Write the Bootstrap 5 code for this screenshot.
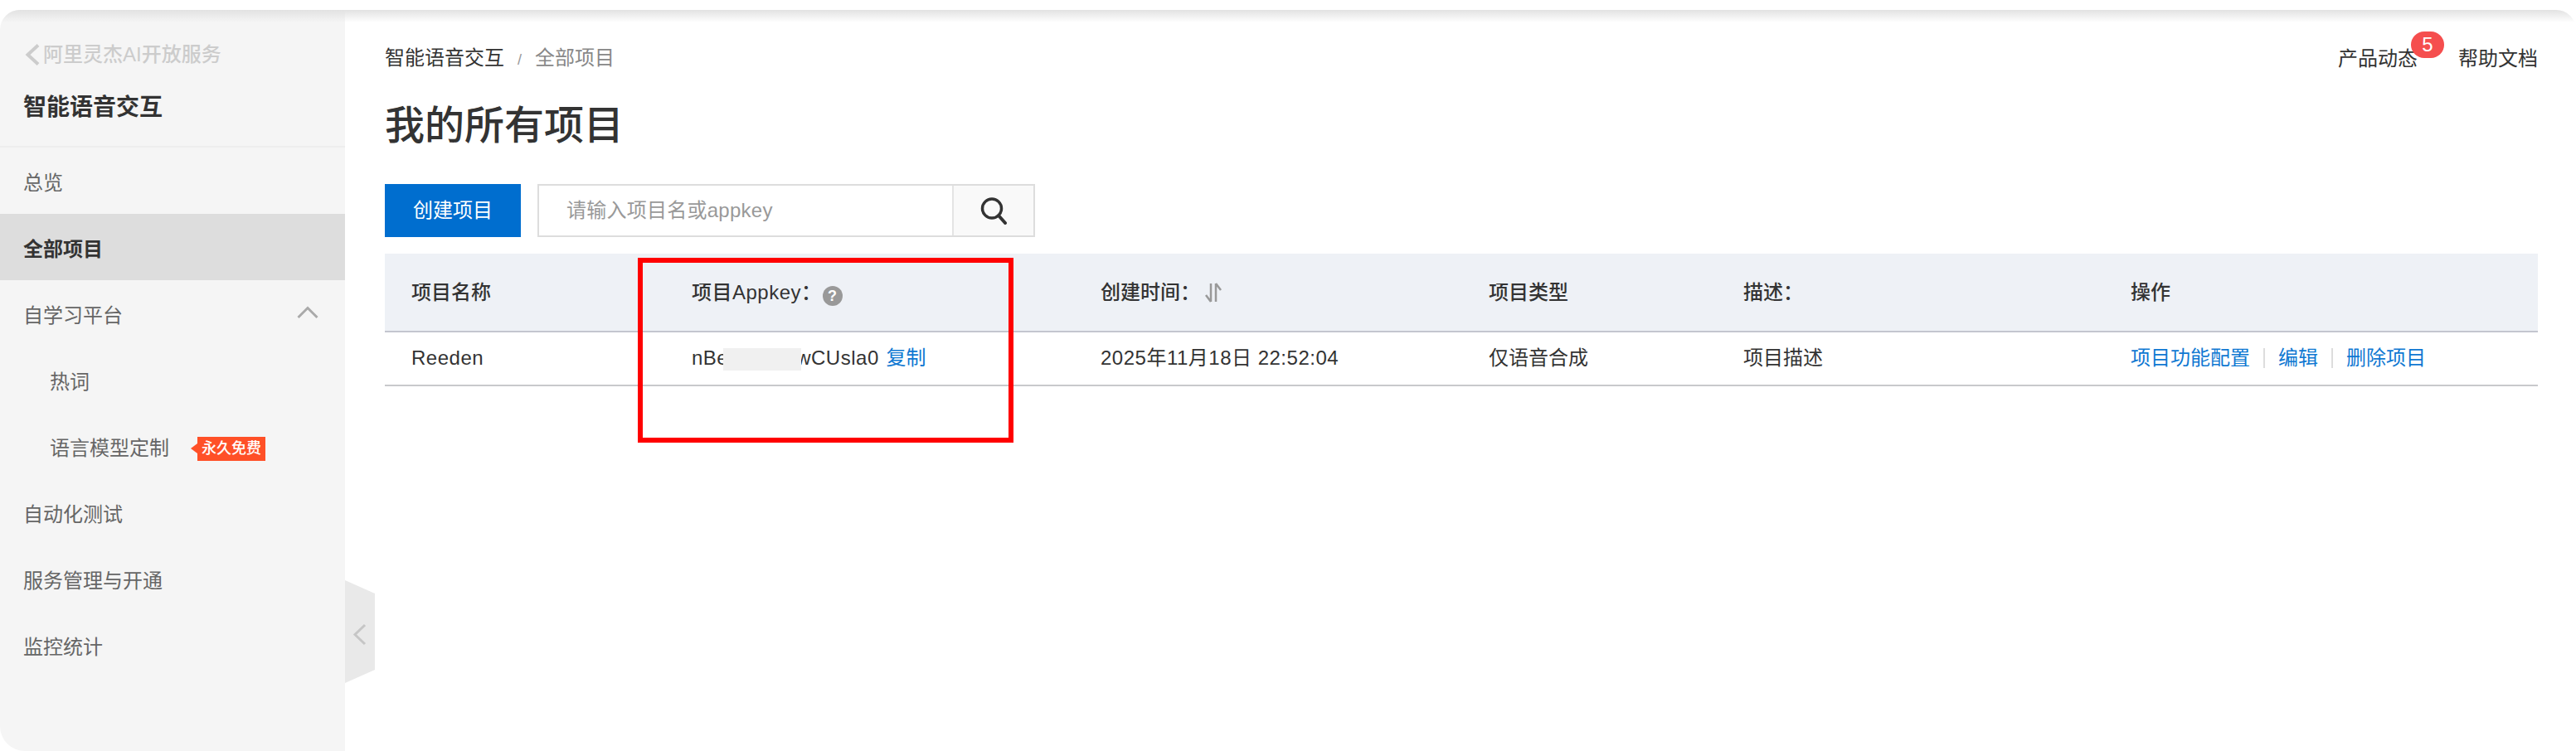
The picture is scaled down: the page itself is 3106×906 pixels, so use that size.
<!doctype html>
<html lang="zh"><head><meta charset="utf-8"><title>我的所有项目</title>
<link href="https://cdn.jsdelivr.net/npm/bootstrap@5.3.0/dist/css/bootstrap.min.css" rel="stylesheet">
<style>
html,body{height:906px;overflow:hidden;background:#fff}
body{padding-top:12px;font:24px/34px "Liberation Sans","Noto Sans CJK SC",sans-serif;color:#333}
.lat{letter-spacing:.5px}
.shell{height:894px;border-radius:24px 24px 0 30px;overflow:hidden;position:relative;background:#fff}
.shell::before{content:"";position:absolute;left:0;right:0;top:0;height:15px;background:linear-gradient(#e2e2e2,rgba(240,240,240,0));z-index:2}
.side{width:416px;flex:none;background:#f5f5f5;position:relative}
.side-head{height:166px;border-bottom:2px solid #eee;padding:37px 28px 0}
.backlink{color:#ccc;font-weight:500;display:flex;align-items:center;gap:3px;height:34px;margin-left:0}
.side-title{font-size:28px;font-weight:700;color:#333;margin-top:27px;line-height:40px}
.menu-row{height:80px;padding:6px 28px 0;color:#666;display:flex;align-items:center;text-decoration:none;justify-content:space-between}
.menu-row.on{background:#ddd;color:#333;font-weight:700}
.menu-row.sub{padding-left:60px;justify-content:flex-start}
.tag-free{position:relative;background:#ff5027;color:#fff;font-size:18px;line-height:29px;height:29px;width:82px;margin-left:34px;text-align:center;font-weight:500}
.tag-free::before{content:"";position:absolute;left:-8px;top:8px;border:6.5px solid transparent;border-left:0;border-right:8px solid #ff5027}
.fold{position:absolute;left:416px;top:688px;z-index:1}
.work{flex:1;padding:42px 46px 0 48px;min-width:0}
.crumb-row{height:34px}
.crumb-row a{color:#333;text-decoration:none}
.slash{color:#999;font-size:18px;margin:0 16px 0 16px}
.crumb-now{color:#888}
.help-links{gap:49px;position:relative}
.dot5{position:absolute;left:88px;top:-16px;width:40px;height:32px;border-radius:16px;background:#f54e4e;color:#fff;text-align:center;line-height:32px;font-size:24px}
.page-h{font-size:48px;font-weight:500;line-height:64px;margin:32px 0 0;color:#333}
.tools{margin-top:38px;height:64px;gap:20px}
.btn-new{width:164px;height:64px;background:#006ecf;border:0;border-radius:0;color:#fff;font-size:24px;padding:0}
.btn-new:hover{background:#006ecf;color:#fff}
.search-box{width:600px;height:64px;border:2px solid #ddd;display:flex}
.search-box input{flex:1;border:0;outline:0;padding:0 33px;font-size:24px;color:#333;min-width:0;letter-spacing:.25px}
.search-box input::placeholder{color:#999}
.search-go{width:98px;border:0;border-left:2px solid #e4e4e4;background:#f9f9f9;padding:0;display:flex;align-items:center;justify-content:center}
.grid-wrap{position:relative;margin:20px 0 0}
table.tbl{table-layout:fixed;width:2596px;margin:0;border-collapse:collapse}
.tbl th,.tbl td{padding:0 0 0 30px;vertical-align:middle;font-size:24px;color:#333;background:transparent;box-shadow:none}
.tbl th:first-child,.tbl td:first-child{padding-left:32px}
.tbl th{height:94px;background:#eef1f6;border-bottom:2px solid #c4c6cf;font-weight:500}
.tbl td{height:65px;padding-bottom:2px;border-bottom:2px solid #c8c9cc}
.w1{width:340px}.w2{width:493px}.w3{width:468px}.w4{width:307px}.w5{width:467px}.w6{width:521px}
.tbl a{color:#0f78d2;text-decoration:none}
.hint{display:inline-flex;width:24px;height:24px;border-radius:50%;background:#999;color:#fff;font-size:18px;font-weight:700;align-items:center;justify-content:center;vertical-align:-2px;margin-left:1px;letter-spacing:0}
.sort-ic{vertical-align:-4px;margin-left:5px}
.mask{display:inline-block;width:94px;height:27px;background:#f0f0f0;vertical-align:middle;margin:0 -6px 0 -6px;position:relative;z-index:1}
.copy-link{margin-left:2px}
.sep{display:inline-block;width:2px;height:24px;background:#ddd;margin:0 16px;vertical-align:-4px}
.redbox{position:absolute;left:305px;top:5px;width:453px;height:223px;border:6px solid #f00;pointer-events:none;z-index:2}
</style></head>
<body>
<div class="shell d-flex">
<aside class="side">
  <div class="side-head">
    <div class="backlink"><svg width="21" height="26" viewBox="0 0 21 26"><path d="M18 1.500 5.500 13 18 24.500" fill="none" stroke="#ccc" stroke-width="4"/></svg><span>阿里灵杰AI开放服务</span></div>
    <div class="side-title">智能语音交互</div>
  </div>
  <a class="menu-row">总览</a>
  <a class="menu-row on">全部项目</a>
  <a class="menu-row"><span>自学习平台</span><svg width="26" height="16" viewBox="0 0 26 16" class="mb-2 me-1"><path d="M1.500 14 13 2.500 24.500 14" fill="none" stroke="#aaa" stroke-width="3"/></svg></a>
  <a class="menu-row sub">热词</a>
  <a class="menu-row sub">语言模型定制<span class="tag-free">永久免费</span></a>
  <a class="menu-row">自动化测试</a>
  <a class="menu-row">服务管理与开通</a>
  <a class="menu-row">监控统计</a>
  <svg class="fold" width="36" height="124" viewBox="0 0 36 124"><path d="M0 0 36 16V108L0 124Z" fill="#e9e9e9"/><path d="M24 54 12 65.500 24 77" fill="none" stroke="#c6c6c6" stroke-width="3"/></svg>
</aside>
<main class="work">
  <div class="crumb-row d-flex justify-content-between align-items-center">
    <div><a href="#">智能语音交互</a><span class="slash">/</span><span class="crumb-now">全部项目</span></div>
    <div class="help-links d-flex"><span>产品动态</span><span class="dot5">5</span><span>帮助文档</span></div>
  </div>
  <h1 class="page-h">我的所有项目</h1>
  <div class="tools d-flex">
    <button class="btn btn-new">创建项目</button>
    <div class="search-box"><input placeholder="请输入项目名或appkey"><button class="search-go" aria-label="搜索"><svg width="34" height="34" viewBox="0 0 34 34"><circle cx="15" cy="14.500" r="11.500" fill="none" stroke="#333" stroke-width="3.500"/><path d="m23 23 8 9" stroke="#333" stroke-width="4" stroke-linecap="round"/></svg></button></div>
  </div>
  <div class="grid-wrap">
    <table class="table tbl">
      <colgroup><col class="w1"><col class="w2"><col class="w3"><col class="w4"><col class="w5"><col class="w6"></colgroup>
      <thead><tr>
        <th>项目名称</th>
        <th><span class="lat">项目Appkey：</span><span class="hint">?</span></th>
        <th>创建时间：<svg class="sort-ic" width="22" height="24" viewBox="0 0 22 24"><path d="M8 1V23M8 23 2 15" fill="none" stroke="#999" stroke-width="2.500"/><path d="M14 23V1M14 1 20 9" fill="none" stroke="#999" stroke-width="2.500"/></svg></th>
        <th>项目类型</th><th>描述：</th><th>操作</th>
      </tr></thead>
      <tbody><tr>
        <td><span class="lat">Reeden</span></td>
        <td><span class="lat">nBe<span class="mask"></span>wCUsla0</span> <a class="copy-link" href="#">复制</a></td>
        <td><span class="lat">2025年11月18日 22:52:04</span></td>
        <td>仅语音合成</td><td>项目描述</td>
        <td><a href="#">项目功能配置</a><span class="sep"></span><a href="#">编辑</a><span class="sep"></span><a href="#">删除项目</a></td>
      </tr></tbody>
    </table>
    <div class="redbox"></div>
  </div>
</main>
</div>
<script src="https://cdn.jsdelivr.net/npm/bootstrap@5.3.0/dist/js/bootstrap.bundle.min.js"></script>
</body></html>
